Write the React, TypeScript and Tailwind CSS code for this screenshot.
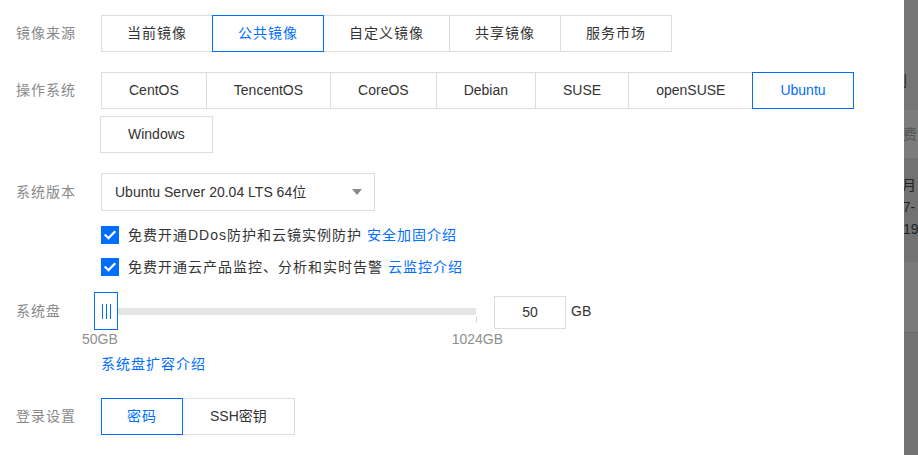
import { useState } from 'react'

const sources = ['当前镜像', '公共镜像', '自定义镜像', '共享镜像', '服务市场']
const systems = ['CentOS', 'TencentOS', 'CoreOS', 'Debian', 'SUSE', 'openSUSE', 'Ubuntu', 'Windows']

// pure chinese labels render a bit wider, so they get letter spacing and less padding
const isCjk = (s: string) => /^[\u4e00-\u9fff]+$/.test(s)

interface SegGroupProps {
  items: string[]
  active: string
  onPick: (v: string) => void
  className?: string
}

function SegGroup({ items, active, onPick, className }: SegGroupProps) {
  return (
    <div className={`flex flex-wrap gap-y-[7px] ${className ?? ''}`}>
      {items.map((item, i) => {
        const on = item === active
        return (
          <button
            key={item}
            onClick={() => onPick(item)}
            className={`h-[37px] border text-[14px] leading-[35px] bg-white ${i > 0 ? '-ml-px' : ''} ${
              isCjk(item) ? 'px-[25px] tracking-[1px]' : 'px-[27px]'
            } ${on ? 'relative z-10 border-[#006eff] text-[#006eff]' : 'border-[#dddddd] text-[#333333]'}`}
          >
            {item}
          </button>
        )
      })}
    </div>
  )
}

function Label({ children }: { children: React.ReactNode }) {
  return <div className="w-[85px] shrink-0 text-[14px] tracking-[1px] text-[#888888]">{children}</div>
}

function Check({ text, link }: { text: string; link: string }) {
  return (
    <div className="flex h-[32px] items-center">
      <span className="flex h-[18px] w-[18px] items-center justify-center bg-[#006eff]">
        <svg width="14" height="14" viewBox="0 0 14 14" fill="none">
          <path d="M2.5 7.2l3 2.9 6-6" stroke="white" strokeWidth="2.2" strokeLinecap="square" />
        </svg>
      </span>
      <span className="ml-[9px] text-[14px] tracking-[1px] text-[#333333]">{text}</span>
      <a className="ml-[5px] text-[14px] tracking-[1px] text-[#006eff]">{link}</a>
    </div>
  )
}

export default function App() {
  const [source, setSource] = useState('公共镜像')
  const [os, setOs] = useState('Ubuntu')
  const [login, setLogin] = useState('密码')

  return (
    <div className="flex h-[455px] w-[918px] overflow-hidden bg-white font-['Liberation_Sans','Noto_Sans_CJK_SC',sans-serif]">
      <div className="w-[904px] shrink-0 pl-4 pt-[15px]">
        {/* 镜像来源 */}
        <div className="flex items-center">
          <Label>镜像来源</Label>
          <SegGroup items={sources} active={source} onPick={setSource} />
        </div>

        {/* 操作系统 */}
        <div className="mt-[20px] flex items-start">
          <Label>
            <span className="leading-[37px]">操作系统</span>
          </Label>
          <SegGroup items={systems} active={os} onPick={setOs} className="w-[790px]" />
        </div>

        {/* 系统版本 */}
        <div className="mt-[20px] flex items-center">
          <Label>系统版本</Label>
          <div className="flex h-[38px] w-[274px] items-center justify-between border border-[#dddddd] pl-[13px] pr-[12px]">
            <span className="text-[14px] text-[#333333]">Ubuntu Server 20.04 LTS 64位</span>
            <svg width="10" height="6" viewBox="0 0 10 6">
              <path d="M0 0h10L5 6z" fill="#8a8a8a" />
            </svg>
          </div>
        </div>

        <div className="mt-[8px] pl-[85px]">
          <Check text="免费开通DDos防护和云镜实例防护" link="安全加固介绍" />
          <Check text="免费开通云产品监控、分析和实时告警" link="云监控介绍" />
        </div>

        {/* 系统盘 */}
        <div className="mt-[9px] flex items-center">
          <Label>系统盘</Label>
          <div className="relative h-[38px] w-[375px]">
            <div className="absolute left-0 right-0 top-[16px] h-[7px] bg-[#e5e5e5]" />
            <div className="absolute left-[375px] top-[24px] h-[6px] w-px bg-[#d5d5d5]" />
            <div className="absolute -left-[7px] top-0 flex h-[38px] w-[24px] items-center justify-center gap-[3px] border border-[#006eff] bg-white">
              <span className="h-[15px] w-px bg-[#006eff]" />
              <span className="h-[15px] w-px bg-[#006eff]" />
              <span className="h-[15px] w-px bg-[#006eff]" />
            </div>
          </div>
          <div className="ml-[18px] mt-[4px] flex h-[33px] w-[72px] items-center justify-center self-start border border-[#dddddd] text-[14px] text-[#333333]">
            50
          </div>
          <span className="ml-[5px] text-[14px] text-[#333333]">GB</span>
        </div>
        <div className="ml-[66px] flex w-[421px] justify-between text-[14px] leading-[18px] text-[#8f8f8f]">
          <span>50GB</span>
          <span>1024GB</span>
        </div>
        <div className="ml-[85px] mt-[4px] text-[14px] leading-[24px] tracking-[1px] text-[#006eff]">系统盘扩容介绍</div>

        {/* 登录设置 */}
        <div className="mt-[22px] flex items-center">
          <Label>登录设置</Label>
          <SegGroup items={['密码', 'SSH密钥']} active={login} onPick={setLogin} />
        </div>
      </div>

      {/* dimmed page behind */}
      <div className="flex w-[14px] shrink-0 flex-col overflow-hidden whitespace-nowrap text-[14px]">
        <div className="h-[110px] bg-[#757575] pt-[71px]">
          <span className="-ml-[11px] block text-[#262626]">划</span>
        </div>
        <div className="flex h-[48px] items-center bg-[#7c7c7c] text-[#555555]">
          <span className="-ml-px">费</span>
        </div>
        <div className="h-[104px] bg-[#727272] pt-[16px] leading-[22px] text-[#222222]">
          <span className="-ml-[2px] block">月</span>
          <span className="-ml-[9px] block">07-</span>
          <span className="-ml-[1px] block">19</span>
        </div>
        <div className="h-[70px] bg-[#7a7a7a]" />
        <div className="flex-1 border-t border-[#6a6a6a] bg-[#737373]" />
      </div>
    </div>
  )
}
